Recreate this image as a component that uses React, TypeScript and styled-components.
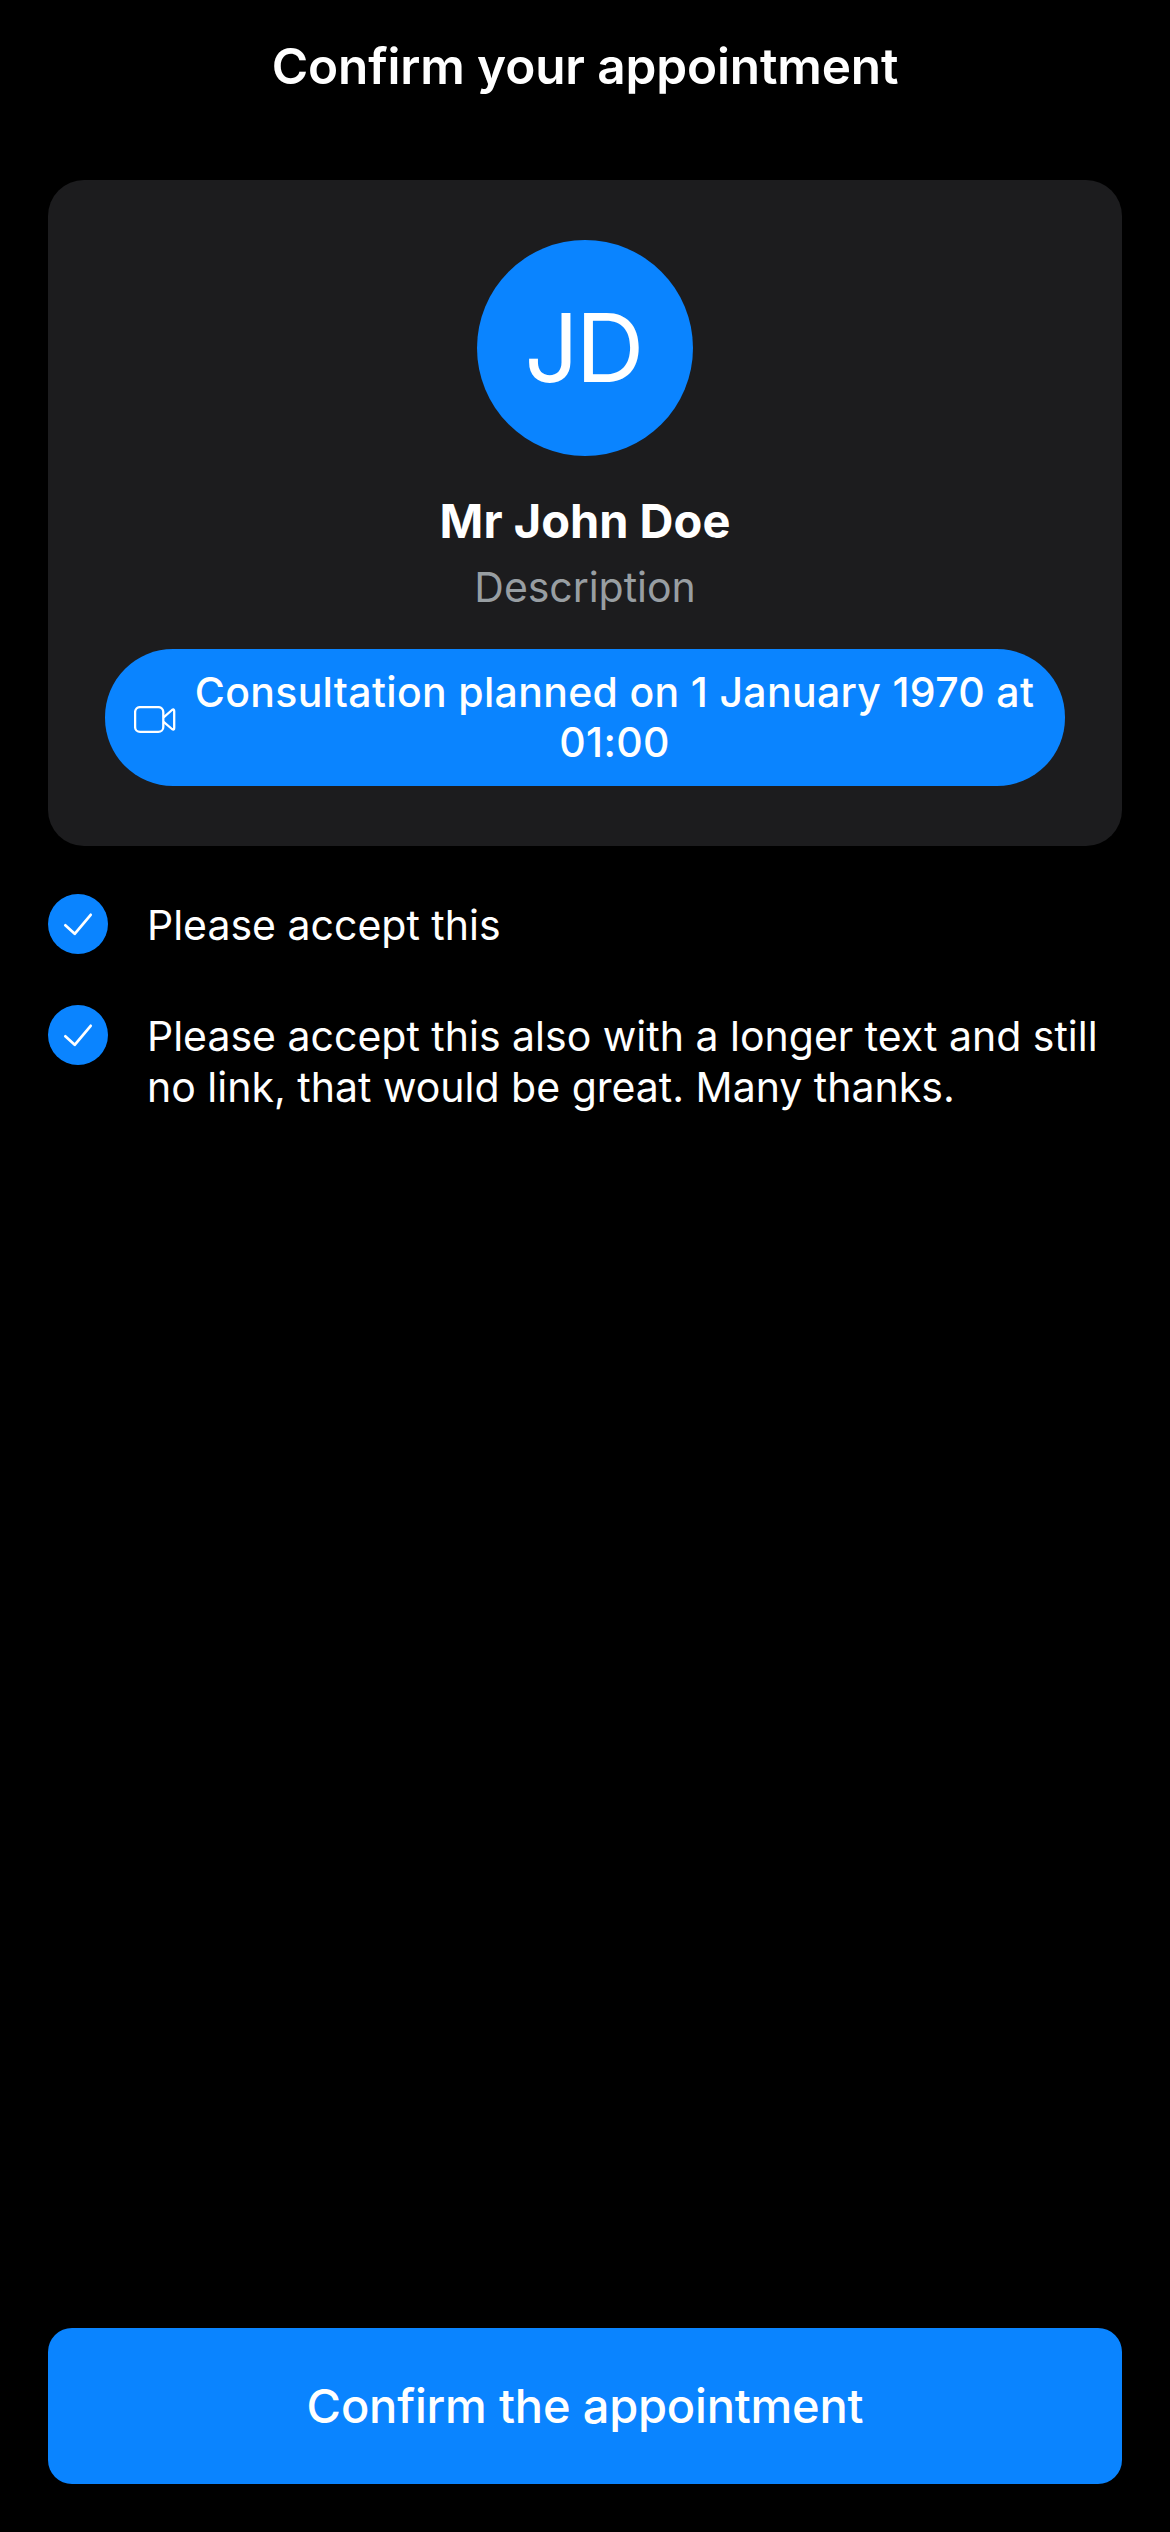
import React from "react";
import styled, { createGlobalStyle } from "styled-components";

const GlobalStyle = createGlobalStyle`
  *, *::before, *::after { box-sizing: border-box; }
  body {
    margin: 0;
    background: #000;
    color: #fff;
    font-family: Inter, "Liberation Sans", sans-serif;
  }
`;

const Screen = styled.div`
  display: flex;
  flex-direction: column;
  min-height: 100vh;
  padding: 0 48px 48px;
  background: #000;
`;

const Header = styled.header`
  display: flex;
  align-items: center;
  justify-content: center;
  height: 132px;
  margin-bottom: 48px;
`;

const Title = styled.h1`
  margin: 0 0 1px;
  font-size: 49.5px;
  font-weight: 600;
  line-height: 60px;
  letter-spacing: -0.14px;
`;

const Card = styled.section`
  display: flex;
  flex-direction: column;
  align-items: center;
  padding: 60px 57px;
  border-radius: 36px;
  background: #1c1c1e;
`;

const Avatar = styled.div`
  display: flex;
  align-items: center;
  justify-content: center;
  width: 216px;
  height: 216px;
  padding: 0 4px 2px 0;
  border-radius: 50%;
  background: #0a84ff;
  font-size: 95px;
  letter-spacing: -3px;
`;

const Name = styled.h2`
  margin: 37px 0 13px;
  font-size: 47px;
  font-weight: 700;
  line-height: 56px;
`;

const Description = styled.p`
  margin: 0 0 37px;
  color: #989ea2;
  font-size: 41px;
  line-height: 50px;
  letter-spacing: -0.05px;
`;

const DatePill = styled.div`
  display: flex;
  align-items: center;
  gap: 18px;
  width: 960px;
  padding: 18px 29px 19px;
  border-radius: 68px;
  background: #0a84ff;
`;

const DateText = styled.span`
  flex: 1;
  font-size: 41px;
  font-weight: 500;
  line-height: 50px;
  letter-spacing: 0.325px;
  text-align: center;
`;

const VideoSvg = styled.svg`
  flex: none;
  width: 42px;
  height: 28px;
  margin: 5px -1px 0 0;
`;

const ConsentList = styled.ul`
  display: flex;
  flex-direction: column;
  gap: 51px;
  margin: 48px 0 0;
  padding: 0;
  list-style: none;
`;

const ConsentRow = styled.li`
  display: flex;
  align-items: flex-start;
  gap: 39px;
  min-height: 60px;
`;

const Check = styled.span`
  flex: none;
  display: flex;
  width: 60px;
  height: 60px;
  border-radius: 50%;
  background: #0a84ff;
`;

const ConsentText = styled.span`
  flex: 1;
  padding-top: 6px;
  font-size: 41px;
  line-height: 51px;
`;

const ConfirmButton = styled.button`
  height: 156px;
  margin-top: auto;
  padding: 0 0 2px;
  border: 0;
  border-radius: 24px;
  background: #0a84ff;
  color: #fff;
  font-family: inherit;
  font-size: 47px;
  font-weight: 500;
  letter-spacing: -0.2px;
`;

const VideoIcon = () => (
  <VideoSvg viewBox="0 0 42 28" fill="none" stroke="#fff" strokeWidth="2.3" strokeLinejoin="round">
    <rect x="1.1" y="1.1" width="28.2" height="24.8" rx="5" />
    <path d="M29.6 11.4 38 4Q40.2 2.5 40.2 5V22Q40.2 24.5 38 23L29.6 15.8" />
  </VideoSvg>
);

const CheckIcon = () => (
  <svg width="60" height="60" viewBox="0 0 60 60" fill="none" stroke="#fff" strokeWidth="2.7" strokeLinecap="round" strokeLinejoin="round">
    <path d="M17.3 31.3 26.7 39.8 42.7 20.8" />
  </svg>
);

const consents = [
  "Please accept this",
  "Please accept this also with a longer text and still no link, that would be great. Many thanks.",
];

export default function App() {
  return (
    <>
      <GlobalStyle />
      <Screen>
        <Header>
          <Title>Confirm your appointment</Title>
        </Header>
        <Card>
          <Avatar>JD</Avatar>
          <Name>Mr John Doe</Name>
          <Description>Description</Description>
          <DatePill>
            <VideoIcon />
            <DateText>Consultation planned on 1 January 1970 at 01:00</DateText>
          </DatePill>
        </Card>
        <ConsentList>
          {consents.map((text) => (
            <ConsentRow key={text}>
              <Check>
                <CheckIcon />
              </Check>
              <ConsentText>{text}</ConsentText>
            </ConsentRow>
          ))}
        </ConsentList>
        <ConfirmButton type="button">Confirm the appointment</ConfirmButton>
      </Screen>
    </>
  );
}
